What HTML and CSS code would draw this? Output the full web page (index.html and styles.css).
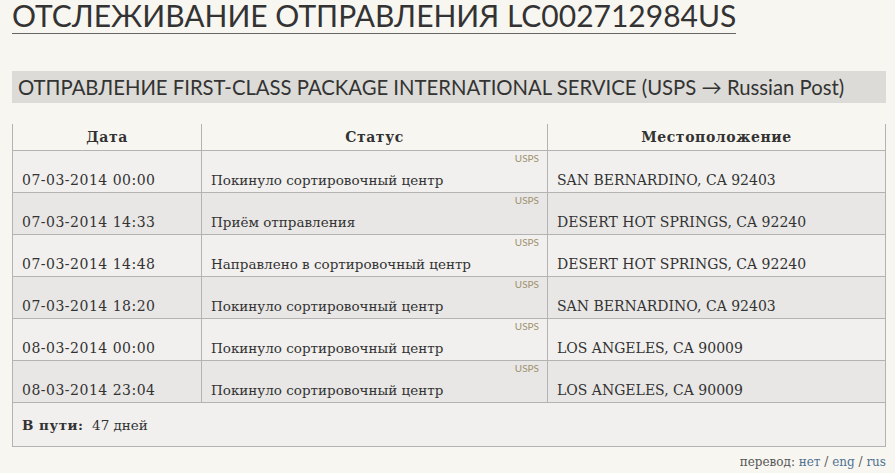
FILE: index.html
```html
<!DOCTYPE html>
<html lang="ru">
<head>
    <meta charset="UTF-8">
    <title>Отслеживание отправления LC002712984US</title>
    <link rel="stylesheet" href="styles.css">
</head>
<body>
    <div class="page">
        <h1 class="title">ОТСЛЕЖИВАНИЕ ОТПРАВЛЕНИЯ LC002712984US</h1>

        <h2 class="service">ОТПРАВЛЕНИЕ FIRST-CLASS PACKAGE INTERNATIONAL SERVICE (USPS &rarr; Russian Post)</h2>

        <table class="track">
            <thead>
                <tr>
                    <th class="col-date">Дата</th>
                    <th class="col-status">Статус</th>
                    <th>Местоположение</th>
                </tr>
            </thead>
            <tbody>
                <tr>
                    <td class="date">07-03-2014 00:00</td>
                    <td class="status"><span class="src">USPS</span>Покинуло сортировочный центр</td>
                    <td class="place">SAN BERNARDINO, CA 92403</td>
                </tr>
                <tr class="alt">
                    <td class="date">07-03-2014 14:33</td>
                    <td class="status"><span class="src">USPS</span>Приём отправления</td>
                    <td class="place">DESERT HOT SPRINGS, CA 92240</td>
                </tr>
                <tr>
                    <td class="date">07-03-2014 14:48</td>
                    <td class="status"><span class="src">USPS</span>Направлено в сортировочный центр</td>
                    <td class="place">DESERT HOT SPRINGS, CA 92240</td>
                </tr>
                <tr class="alt">
                    <td class="date">07-03-2014 18:20</td>
                    <td class="status"><span class="src">USPS</span>Покинуло сортировочный центр</td>
                    <td class="place">SAN BERNARDINO, CA 92403</td>
                </tr>
                <tr>
                    <td class="date">08-03-2014 00:00</td>
                    <td class="status"><span class="src">USPS</span>Покинуло сортировочный центр</td>
                    <td class="place">LOS ANGELES, CA 90009</td>
                </tr>
                <tr class="alt">
                    <td class="date">08-03-2014 23:04</td>
                    <td class="status"><span class="src">USPS</span>Покинуло сортировочный центр</td>
                    <td class="place">LOS ANGELES, CA 90009</td>
                </tr>
            </tbody>
            <tfoot>
                <tr>
                    <td colspan="3"><b>В пути:</b>&nbsp; 47 дней</td>
                </tr>
            </tfoot>
        </table>

        <div class="lang">перевод: <a href="#">нет</a> / <a href="#">eng</a> / <a href="#">rus</a></div>
    </div>
</body>
</html>
```

FILE: styles.css
```css
/* General */
body {
    margin: 0;
    background-color: #f8f6f1;
    color: #333;
    font-family: "DejaVu Serif", serif;
}

.page {
    padding: 0 9px 0 12px;
}

/* Headings */
.title {
    display: inline-block;
    margin: 0;
    padding-bottom: 3px;
    font-family: Lato, "Open Sans", sans-serif;
    font-weight: normal;
    font-size: 30px;
    line-height: 30px;
    color: #333;
    border-bottom: 1px solid #666;
}

.service {
    margin: 37px 0 21px;
    padding: 0 6px;
    height: 32px;
    line-height: 33px;
    background-color: #dcdbd7;
    font-family: Lato, "Open Sans", sans-serif;
    font-weight: normal;
    font-size: 20.3px;
    color: #333;
}

/* Tracking table */
.track {
    width: 100%;
    border-collapse: collapse;
    font-size: 13.5px;
    color: #333;
}

.track th {
    height: 26px;
    padding: 0;
    font-weight: bold;
    font-size: 14px;
    letter-spacing: 0.6px;
    border: 1px solid #b3b3b3;
    border-top: none;
}

.track .col-date {
    width: 188px;
}

.track .col-status {
    width: 345px;
}

.track td {
    height: 37px;
    padding: 0 9px 4px;
    vertical-align: bottom;
    background-color: #f1f0ee;
    border: 1px solid #b3b3b3;
}

.track tr.alt td {
    background-color: #e8e7e5;
}

.track .date {
    font-size: 14px;
    letter-spacing: 0.5px;
}

.track .place {
    font-size: 14px;
}

.track .status {
    position: relative;
}

.src {
    position: absolute;
    top: 1px;
    right: 8px;
    font-family: Lato, "Open Sans", sans-serif;
    font-size: 10px;
    color: #a0906f;
}

.track tfoot td {
    height: 43px;
    padding: 0 9px;
    vertical-align: middle;
}

.track tfoot b {
    letter-spacing: 0.5px;
}

/* Translation switch */
.lang {
    margin-top: 8px;
    text-align: right;
    font-size: 12px;
    color: #555;
}

.lang a {
    color: #4f7191;
    text-decoration: none;
}
```
